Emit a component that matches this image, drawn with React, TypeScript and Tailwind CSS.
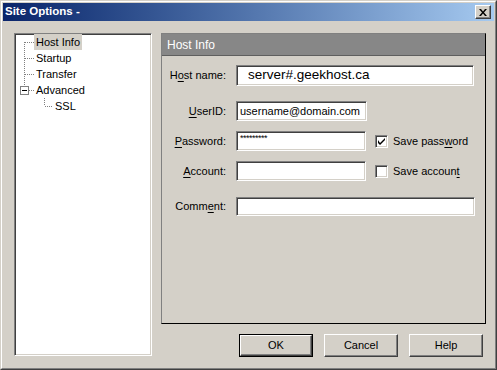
import React from 'react'

const sunken =
  'border border-t-[#808080] border-l-[#808080] border-b-white border-r-white shadow-[inset_1px_1px_0_#404040,inset_-1px_-1px_0_#d4d0c8]'

const raised =
  'border border-t-white border-l-white border-b-[#404040] border-r-[#404040] shadow-[inset_-1px_-1px_0_#808080]'

const TreeLines = () => (
  <svg className="absolute left-0 top-0" width="60" height="80" viewBox="0 0 60 80">
    <g stroke="#808080" strokeWidth="1" strokeDasharray="1 1" fill="none">
      <line x1="9.5" y1="8" x2="9.5" y2="52" />
      <line x1="10" y1="8.5" x2="19" y2="8.5" />
      <line x1="10" y1="24.5" x2="19" y2="24.5" />
      <line x1="10" y1="40.5" x2="19" y2="40.5" />
      <line x1="14" y1="56.5" x2="19" y2="56.5" />
      <line x1="29.5" y1="64" x2="29.5" y2="72" />
      <line x1="30" y1="72.5" x2="38" y2="72.5" />
    </g>
    <rect x="5.5" y="52.5" width="8" height="8" fill="white" stroke="#808080" />
    <line x1="7" y1="56.5" x2="12" y2="56.5" stroke="black" />
  </svg>
)

const Check = ({ checked }: { checked?: boolean }) => (
  <div className={`w-[13px] h-[13px] bg-white ${sunken} flex items-center justify-center`}>
    {checked && (
      <svg width="7" height="7" viewBox="0 0 7 7">
        <path d="M0 2 L0 5 L2 7 L7 2 L7 0 L2 5 Z" fill="black" />
      </svg>
    )}
  </div>
)

const Label = ({ pre, u, post }: { pre: string; u: string; post: string }) => (
  <div className="w-[64px] text-right">
    {pre}
    <span className="underline underline-offset-2">{u}</span>
    {post}
  </div>
)

const Button = ({ label, isDefault }: { label: string; isDefault?: boolean }) => (
  <div className={`w-[74px] h-[23px] ${isDefault ? 'border border-black' : ''}`}>
    <div className={`w-full h-full ${raised} flex items-center justify-center`}>{label}</div>
  </div>
)

export default function App() {
  return (
    <div className="w-[497px] h-[370px] bg-[#d4d0c8] border border-t-[#d4d0c8] border-l-[#d4d0c8] border-b-[#404040] border-r-[#404040] font-['Liberation_Sans',Arial,sans-serif] text-[11px] text-black">
      <div className="w-full h-full border border-t-white border-l-white border-b-[#808080] border-r-[#808080] p-[1px]">
        {/* title bar */}
        <div className="h-[18px] bg-linear-to-r from-[#0a246a] to-[#a6caf0] flex items-center justify-between pl-[2px] pr-[3px]">
          <span className="text-white font-bold text-[11.5px]">Site Options -</span>
          <div className={`w-[16px] h-[14px] bg-[#d4d0c8] ${raised} flex items-center justify-center`}>
            <svg width="8" height="7" viewBox="0 0 8 7">
              <path d="M0 0 L2 0 L4 2.5 L6 0 L8 0 L5 3.5 L8 7 L6 7 L4 4.5 L2 7 L0 7 L3 3.5 Z" fill="black" />
            </svg>
          </div>
        </div>

        <div className="flex pl-[11px] pt-[12px]">
          {/* tree */}
          <div className={`relative w-[138px] h-[323px] bg-white ${sunken}`}>
            <TreeLines />
            <div className="relative flex flex-col">
              <div className="h-[16px] flex items-center pl-[19px]">
                <span className="bg-[#d4d0c8] px-[2px] pt-[1px] leading-[15px]">Host Info</span>
              </div>
              <div className="h-[16px] flex items-center pl-[21px] pt-[1px]">Startup</div>
              <div className="h-[16px] flex items-center pl-[21px] pt-[1px]">Transfer</div>
              <div className="h-[16px] flex items-center pl-[21px] pt-[1px]">Advanced</div>
              <div className="h-[16px] flex items-center pl-[40px] pt-[1px]">SSL</div>
            </div>
          </div>

          {/* right side */}
          <div className="ml-[9px] w-[325px] flex flex-col">
            <div className="h-[291px] border border-t-[#808080] border-l-[#808080] border-b-black border-r-black">
              <div className="h-[22px] bg-[#878787] border-b border-[#5f5f5f] text-white text-[12px] flex items-center pl-[5px]">
                Host Info
              </div>
              <div className="flex flex-col pt-[9px]">
                <div className="flex items-center">
                  <Label pre="H" u="o" post="st name:" />
                  <div className={`ml-[10px] w-[238px] h-[21px] bg-white ${sunken} flex items-center pl-[11px] text-[13.5px]`}>
                    server#.geekhost.ca
                  </div>
                </div>
                <div className="flex items-center mt-[15px]">
                  <Label pre="" u="U" post="serID:" />
                  <div className={`ml-[10px] w-[131px] h-[20px] bg-white ${sunken} flex items-center pl-[3px]`}>
                    username@domain.com
                  </div>
                </div>
                <div className="flex items-center mt-[10px]">
                  <Label pre="" u="P" post="assword:" />
                  <div className={`ml-[10px] w-[130px] h-[20px] bg-white ${sunken} flex items-start pl-[3px] pt-[1px] text-[9px] leading-[10px] tracking-[-0.5px]`}>
                    *********
                  </div>
                  <div className="ml-[9px]">
                    <Check checked />
                  </div>
                  <div className="ml-[5px]">
                    Save pass<span className="underline underline-offset-2">w</span>ord
                  </div>
                </div>
                <div className="flex items-center mt-[10px]">
                  <Label pre="" u="A" post="ccount:" />
                  <div className={`ml-[10px] w-[130px] h-[20px] bg-white ${sunken}`} />
                  <div className="ml-[9px]">
                    <Check />
                  </div>
                  <div className="ml-[5px]">
                    Save accoun<span className="underline underline-offset-2">t</span>
                  </div>
                </div>
                <div className="flex items-center mt-[16px]">
                  <Label pre="Comm" u="e" post="nt:" />
                  <div className={`ml-[10px] w-[239px] h-[19px] bg-white ${sunken}`} />
                </div>
              </div>
            </div>

            <div className="mt-[10px] flex justify-end gap-[11px] pr-[3px]">
              <Button label="OK" isDefault />
              <Button label="Cancel" />
              <Button label="Help" />
            </div>
          </div>
        </div>
      </div>
    </div>
  )
}
